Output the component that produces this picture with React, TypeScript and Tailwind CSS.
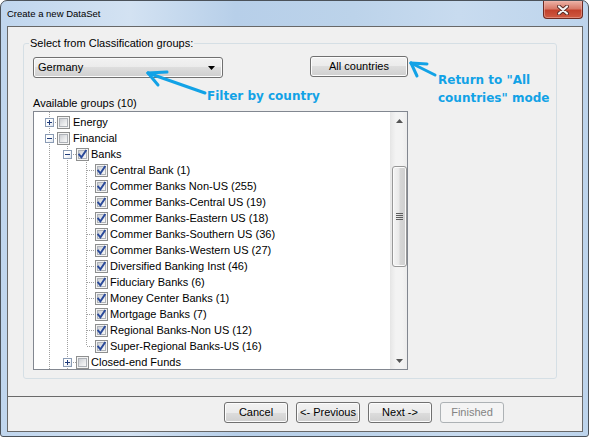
import React from 'react';

type R = { l: 0 | 1 | 2; t: string; e?: '+' | '-'; c: boolean };

const leaves = [
  'Central Bank (1)',
  'Commer Banks Non-US (255)',
  'Commer Banks-Central US (19)',
  'Commer Banks-Eastern US (18)',
  'Commer Banks-Southern US (36)',
  'Commer Banks-Western US (27)',
  'Diversified Banking Inst (46)',
  'Fiduciary Banks (6)',
  'Money Center Banks (1)',
  'Mortgage Banks (7)',
  'Regional Banks-Non US (12)',
  'Super-Regional Banks-US (16)',
];

const rows: R[] = [
  { l: 0, t: 'Energy', e: '+', c: false },
  { l: 0, t: 'Financial', e: '-', c: false },
  { l: 1, t: 'Banks', e: '-', c: true },
  ...leaves.map((t) => ({ l: 2 as const, t, c: true })),
  { l: 1, t: 'Closed-end Funds', e: '+', c: false },
];

function Expander({ sign, cls }: { sign: '+' | '-'; cls: string }) {
  return (
    <div className={`relative mt-[4px] h-[9px] w-[9px] shrink-0 border border-[#8b9cb5] bg-[linear-gradient(135deg,#ffffff_40%,#dfe5ee_100%)] ${cls}`}>
      <div className="absolute left-[1px] top-[3px] h-[1px] w-[5px] bg-[#1f3b7a]" />
      {sign === '+' && <div className="absolute left-[3px] top-[1px] h-[5px] w-[1px] bg-[#1f3b7a]" />}
    </div>
  );
}

function Check({ on }: { on: boolean }) {
  return (
    <div className="relative mt-[2px] h-[13px] w-[13px] shrink-0 border border-[#8e8f8f] bg-[#f4f4f4] p-[1px]">
      <div className="h-[9px] w-[9px] border border-[#aeb2b8] bg-[linear-gradient(135deg,#cbced3_0%,#e9eaec_60%,#f8f8f8_100%)]" />
      {on && (
        <svg className="absolute left-0 top-0" width="11" height="11" viewBox="0 0 11 11">
          <path d="M2.2 5.6 L4.4 8.4 L8.8 1.8" fill="none" stroke="#2a4a9a" strokeWidth="1.9" strokeLinecap="square" />
        </svg>
      )}
    </div>
  );
}

function Row({ r }: { r: R }) {
  const pad = r.l === 0 ? 'pl-[11px]' : r.l === 1 ? 'pl-[29px]' : 'pl-[61px]';
  const emr = r.l === 0 ? 'mr-[3px]' : 'mr-[4px]';
  const tml = r.l === 0 ? 'ml-[3px]' : 'ml-[2px]';
  return (
    <div className={`relative flex h-[16px] items-start ${pad}`}>
      {r.e && <Expander sign={r.e} cls={emr} />}
      <Check on={r.c} />
      <span className={`${tml} whitespace-nowrap text-[11px] leading-[16px] text-black`}>{r.t}</span>
    </div>
  );
}

function TreeLines() {
  const d = '1 1';
  const col = '#a0a0a0';
  const hy = (i: number) => 10.5 + 16 * i;
  return (
    <svg className="pointer-events-none absolute left-0 top-0" width="356" height="257">
      <line x1="15.5" y1="0" x2="15.5" y2="257" stroke={col} strokeDasharray={d} />
      <line x1="33.5" y1="26" x2="33.5" y2="257" stroke={col} strokeDasharray={d} />
      <line x1="52.5" y1="42" x2="52.5" y2="234" stroke={col} strokeDasharray={d} />
      {[0, 1].map((i) => (
        <line key={'a' + i} x1="15" y1={hy(i)} x2="23" y2={hy(i)} stroke={col} strokeDasharray={d} />
      ))}
      {[2, 15].map((i) => (
        <line key={'b' + i} x1="33" y1={hy(i)} x2="42" y2={hy(i)} stroke={col} strokeDasharray={d} />
      ))}
      {Array.from({ length: 12 }, (_, k) => k + 3).map((i) => (
        <line key={'c' + i} x1="53" y1={hy(i)} x2="61" y2={hy(i)} stroke={col} strokeDasharray={d} />
      ))}
    </svg>
  );
}

function ScrollBar() {
  return (
    <div className="flex h-full w-[17px] shrink-0 flex-col items-center border-l border-[#e6e6e6] bg-[linear-gradient(to_right,#e8e8e8,#f3f3f3_30%,#f3f3f3_70%,#ececec)]">
      <div className="flex h-[17px] w-full items-center justify-center">
        <svg width="7" height="4" viewBox="0 0 7 4">
          <polygon points="0,4 3.5,0 7,4" fill="#555" />
        </svg>
      </div>
      <div className="mt-[37px] flex h-[101px] w-[15px] items-center justify-center rounded-[3px] border border-[#979797] bg-[linear-gradient(to_right,#f4f4f4_0%,#e9e9e9_45%,#d6d6d6_55%,#cfcfcf_100%)] shadow-[inset_0_0_0_1px_#fbfbfb]">
        <div className="flex flex-col gap-[1px]">
          <div className="h-[1px] w-[7px] bg-[#5e5e5e]" />
          <div className="h-[1px] w-[7px] bg-[#5e5e5e]" />
          <div className="h-[1px] w-[7px] bg-[#5e5e5e]" />
          <div className="h-[1px] w-[7px] bg-[#5e5e5e]" />
        </div>
      </div>
      <div className="flex-1" />
      <div className="flex h-[17px] w-full items-center justify-center">
        <svg width="7" height="4" viewBox="0 0 7 4">
          <polygon points="0,0 3.5,4 7,0" fill="#555" />
        </svg>
      </div>
    </div>
  );
}

function Btn({ children, disabled, w }: { children: React.ReactNode; disabled?: boolean; w: string }) {
  const base = `flex h-[21px] ${w} items-center justify-center rounded-[3px] text-[11px] leading-[13px]`;
  if (disabled)
    return <div className={`${base} border border-[#adb2b5] bg-[#f4f4f4] text-[#838383]`}>{children}</div>;
  return (
    <div className={`${base} border border-[#707070] bg-[linear-gradient(to_bottom,#f2f2f2_0%,#ebebeb_50%,#dddddd_50%,#cfcfcf_100%)] text-black shadow-[inset_0_0_0_1px_#fcfcfc]`}>
      {children}
    </div>
  );
}

export default function App() {
  return (
    <div className="relative h-[437px] w-[589px] font-['Liberation_Sans',Arial,sans-serif]">
      <div className="flex h-full w-full flex-col overflow-hidden rounded-t-[7px] rounded-b-[3px] border border-[#4b525a] bg-[linear-gradient(to_right,#c0d6ee_0%,#d3e2f2_22%,#b7cfe9_40%,#bcd3ea_60%,#c8dbef_78%,#bdd4ec_100%)]">
        {/* title bar */}
        <div className="flex h-[25px] shrink-0 items-start">
          <span className="ml-[6px] mt-[7px] text-[9.5px] leading-[12px] text-black">Create a new DataSet</span>
          <div className="ml-auto mr-[5px] flex h-[18px] w-[40px] items-center justify-center rounded-b-[4px] border border-t-0 border-[#6e2a22] bg-[linear-gradient(to_bottom,#edb2a6_0%,#d87a69_45%,#c2412c_55%,#cf5a42_100%)] shadow-[inset_0_0_0_1px_#f0b8ad80]">
            <svg width="12" height="10" viewBox="0 0 12 10">
              <path d="M2 1.5 L10 8.5 M10 1.5 L2 8.5" stroke="#5a2a24" strokeWidth="4" strokeLinecap="round" />
              <path d="M2 1.5 L10 8.5 M10 1.5 L2 8.5" stroke="#f4f4f4" strokeWidth="2.2" strokeLinecap="round" />
            </svg>
          </div>
        </div>

        {/* client */}
        <div className="mb-[4px] ml-[6px] mr-[5px] flex flex-1 flex-col border border-[#686868] bg-[#f0f0f0] text-black">
          <div className="h-[370px] shrink-0 border-b border-[#6a6a6a] pl-[15px] pt-[16px]">
            <div className="relative h-[336px] w-[534px] rounded-[3px] border border-[#d5dfe5] pl-[9px] pt-[12px]">
              <span className="absolute left-[5px] top-[-8px] bg-[#f0f0f0] px-[1px] text-[11px] leading-[14px]">
                Select from Classification groups:
              </span>
              <div className="flex w-[375px] items-start justify-between">
                <div className="mt-[1px] flex h-[21px] w-[190px] items-center justify-between rounded-[3px] border border-[#707070] bg-[linear-gradient(to_bottom,#f2f2f2_0%,#ebebeb_50%,#dddddd_50%,#cfcfcf_100%)] pl-[4px] pr-[7px] shadow-[inset_0_0_0_1px_#fcfcfc]">
                  <span className="text-[11px] leading-[13px]">Germany</span>
                  <svg width="7" height="4" viewBox="0 0 7 4">
                    <polygon points="0,0 7,0 3.5,4" fill="#000" />
                  </svg>
                </div>
                <Btn w="w-[98px]">All countries</Btn>
              </div>
              <div className="mt-[17px] h-[16px] text-[11px] leading-[16px]">Available groups (10)</div>
              <div className="flex h-[259px] w-[375px] overflow-hidden border border-[#828790] bg-white">
                <div className="relative flex-1 overflow-hidden pt-[2px]">
                  <TreeLines />
                  {rows.map((r, i) => (
                    <Row key={i} r={r} />
                  ))}
                </div>
                <ScrollBar />
              </div>
            </div>
          </div>
          <div className="flex flex-1 items-start justify-end gap-[8px] pr-[78px] pt-[5px]">
            <Btn w="w-[64px]">Cancel</Btn>
            <Btn w="w-[64px]">&lt;- Previous</Btn>
            <Btn w="w-[64px]">Next -&gt;</Btn>
            <Btn w="w-[64px]" disabled>
              Finished
            </Btn>
          </div>
        </div>
      </div>

      {/* annotations */}
      <svg className="pointer-events-none absolute left-0 top-0" width="589" height="437">
        <g stroke="#12a2e6" strokeWidth="3" strokeLinecap="round" fill="none">
          <path d="M148 73 L205 93" />
          <path d="M148 73 L167 72" />
          <path d="M148 73 L158 85" />
          <path d="M411 63 L435 75" />
          <path d="M411 63 L427 64" />
          <path d="M411 63 L417 76" />
        </g>
      </svg>
      <span className="absolute left-[207px] top-[89px] whitespace-nowrap font-['DejaVu_Sans',sans-serif] text-[12px] font-bold leading-[14px] text-[#12a2e6]">
        Filter by country
      </span>
      <span className="absolute left-[438px] top-[71px] whitespace-nowrap font-['DejaVu_Sans',sans-serif] text-[12px] font-bold leading-[18px] text-[#12a2e6]">
        Return to "All
        <br />
        countries" mode
      </span>
    </div>
  );
}
